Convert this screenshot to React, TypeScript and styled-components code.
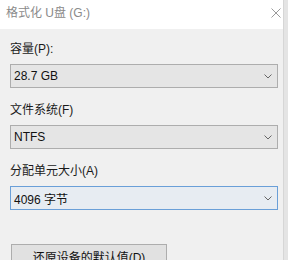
import React from "react";
import styled, { createGlobalStyle } from "styled-components";

const Global = createGlobalStyle`
  html, body { margin: 0; padding: 0; }
  body {
    background: #e4e4e4;
    font-family: "Liberation Sans", "Noto Sans CJK SC", sans-serif;
    font-size: 12px;
    color: #1a1a1a;
    overflow: hidden;
  }
`;

const Window = styled.div`
  width: 283px;
  height: 260px;
  background: #f0f0f0;
  border-right: 1px solid #d6d6d6;
  display: flex;
  flex-direction: column;
  overflow: hidden;
`;

const TitleBar = styled.div`
  height: 29px;
  flex: none;
  background: #ffffff;
  display: flex;
  align-items: flex-start;
  justify-content: space-between;
  padding: 5px 2px 0 6px;
  box-sizing: border-box;
`;

const Title = styled.span`
  line-height: 16px;
  font-size: 12px;
  color: #8a8a8a;
  white-space: pre;
`;

const CloseBtn = styled.span`
  width: 10px;
  height: 10px;
  margin-top: 3px;
  display: flex;
`;

const Content = styled.div`
  display: flex;
  flex-direction: column;
  padding: 12px 5px 0 10px;
`;

const Section = styled.div<{ $first?: boolean }>`
  display: flex;
  flex-direction: column;
  gap: 7px;
  margin-top: ${(p) => (p.$first ? 0 : 14)}px;
`;

const Label = styled.div`
  line-height: 16px;
  font-size: 12px;
  color: #1a1a1a;
`;

const Combo = styled.div<{ $focused?: boolean }>`
  height: 24px;
  box-sizing: border-box;
  width: 268px;
  display: flex;
  align-items: center;
  justify-content: space-between;
  padding: 0 5px 0 3px;
  background: ${(p) => (p.$focused ? "#e7ecf2" : "#e5e5e5")};
  border: 1px solid ${(p) => (p.$focused ? "#6a9fd8" : "#adadad")};
`;

const ComboText = styled.span`
  font-size: 12px;
  color: #111;
`;

const Button = styled.div`
  margin: 34px 0 0 1px;
  width: 156px;
  height: 24px;
  box-sizing: border-box;
  background: #e1e1e1;
  border: 1px solid #adadad;
  display: flex;
  align-items: center;
  justify-content: center;
  font-size: 12px;
  color: #111;
`;

const Chevron = () => (
  <svg width="8" height="5" viewBox="0 0 8 5">
    <path d="M0.5 0.5 L4 4 L7.5 0.5" fill="none" stroke="#666" strokeWidth="1" />
  </svg>
);

const CloseIcon = () => (
  <svg width="10" height="10" viewBox="0 0 10 10">
    <path d="M0.5 0.5 L9.5 9.5 M9.5 0.5 L0.5 9.5" stroke="#9a9a9a" strokeWidth="1" />
  </svg>
);

export default function App() {
  return (
    <>
      <Global />
      <Window>
        <TitleBar>
          <Title>格式化 U盘 (G:)</Title>
          <CloseBtn>
            <CloseIcon />
          </CloseBtn>
        </TitleBar>
        <Content>
          <Section $first>
            <Label>容量(P):</Label>
            <Combo>
              <ComboText>28.7 GB</ComboText>
              <Chevron />
            </Combo>
          </Section>
          <Section>
            <Label>文件系统(F)</Label>
            <Combo>
              <ComboText>NTFS</ComboText>
              <Chevron />
            </Combo>
          </Section>
          <Section>
            <Label>分配单元大小(A)</Label>
            <Combo $focused>
              <ComboText>4096 字节</ComboText>
              <Chevron />
            </Combo>
          </Section>
          <Button>还原设备的默认值(D)</Button>
        </Content>
      </Window>
    </>
  );
}
